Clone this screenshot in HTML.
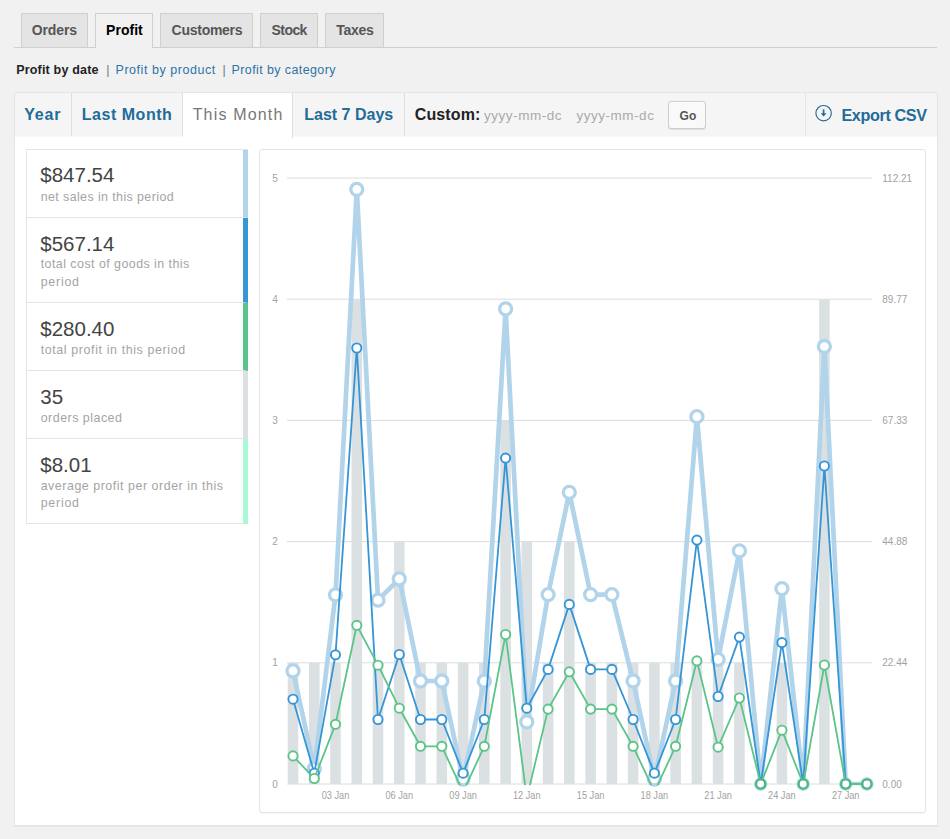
<!DOCTYPE html>
<html><head><meta charset="utf-8"><title>Profit by date</title>
<style>
html,body{margin:0;padding:0;}
body{width:950px;height:839px;background:#f1f1f1;position:relative;overflow:hidden;font-family:"Liberation Sans",sans-serif;}
.t{position:absolute;white-space:nowrap;line-height:1;}
.abs{position:absolute;box-sizing:border-box;}
.tabline{left:14px;top:47px;width:923px;height:1px;background:#cfcfcf;}
.tab{top:13px;height:34px;border:1px solid #cfcfcf;border-bottom:none;background:#e4e4e4;}
.tab.on{background:#f1f1f1;height:35px;}
.postbox{left:14px;top:92px;width:924px;height:734px;background:#fff;border:1px solid #e5e5e5;box-shadow:0 1px 1px rgba(0,0,0,.04);}
.range{left:15px;top:93px;width:922px;height:43px;background:#f5f5f5;border-bottom:1px solid #fafafa;box-sizing:content-box;}
.rt{top:93px;height:43px;border-right:1px solid #dfdfdf;}
.rt.on{background:#fff;height:45px;}
.legend{left:26px;top:149px;width:222px;height:375px;border:1px solid #e5e5e5;border-right:none;background:#fff;}
.lrow{left:27px;width:221px;border-right:5px solid;border-bottom:1px solid #e5e5e5;}
.chartbox{left:259px;top:149px;width:667px;height:664px;border:1px solid #e5e5e5;border-radius:3px;background:#fff;box-shadow:0 1px 1px rgba(0,0,0,.04);}
.plot{position:absolute;left:0;top:0;}
.go{left:668px;top:101px;width:38px;height:28px;border:1px solid #cdcdcd;border-radius:3px;background:#f9f9f9;box-shadow:inset 0 1px 0 #fff,0 1px 0 rgba(0,0,0,.08);}
</style></head><body>
<div class="abs tabline"></div>
<div class="abs tab" style="left:21px;width:67px"></div>
<div class="abs tab on" style="left:95px;width:58px"></div>
<div class="abs tab" style="left:160px;width:93px"></div>
<div class="abs tab" style="left:260px;width:58px"></div>
<div class="abs tab" style="left:325px;width:59px"></div>
<span class="t" style="left:31.8px;top:23.15px;font-size:14px;font-weight:700;color:#555;letter-spacing:-0.144px;">Orders</span>
<span class="t" style="left:106.1px;top:23.15px;font-size:14px;font-weight:700;color:#000;letter-spacing:0.008px;">Profit</span>
<span class="t" style="left:171.6px;top:23.15px;font-size:14px;font-weight:700;color:#555;letter-spacing:-0.268px;">Customers</span>
<span class="t" style="left:271.6px;top:23.15px;font-size:14px;font-weight:700;color:#555;letter-spacing:-0.581px;">Stock</span>
<span class="t" style="left:336.3px;top:23.15px;font-size:14px;font-weight:700;color:#555;letter-spacing:-0.318px;">Taxes</span>
<span class="t" style="left:16.2px;top:63.62px;font-size:12.5px;font-weight:700;color:#222;letter-spacing:0.187px;">Profit by date</span>
<span class="t" style="left:106.3px;top:63.62px;font-size:12.5px;font-weight:400;color:#777;">|</span>
<span class="t" style="left:115.5px;top:63.62px;font-size:12.5px;font-weight:400;color:#2e73a6;letter-spacing:0.549px;">Profit by product</span>
<span class="t" style="left:222.4px;top:63.62px;font-size:12.5px;font-weight:400;color:#777;">|</span>
<span class="t" style="left:231.6px;top:63.62px;font-size:12.5px;font-weight:400;color:#2e73a6;letter-spacing:0.390px;">Profit by category</span>
<div class="abs postbox"></div>
<div class="abs range"></div>
<div class="abs rt" style="left:15px;width:57px"></div>
<div class="abs rt" style="left:72px;width:111px"></div>
<div class="abs rt on" style="left:183px;width:110px"></div>
<div class="abs rt" style="left:293px;width:112px"></div>
<div class="abs rt" style="left:805px;width:1px;border-right:none;background:#e5e5e5"></div>
<span class="t" style="left:24.2px;top:106.96px;font-size:16px;font-weight:700;color:#236b98;letter-spacing:0.862px;">Year</span>
<span class="t" style="left:81.8px;top:106.96px;font-size:16px;font-weight:700;color:#236b98;letter-spacing:0.519px;">Last Month</span>
<span class="t" style="left:192.7px;top:106.96px;font-size:16px;font-weight:400;color:#777;letter-spacing:1.162px;">This Month</span>
<span class="t" style="left:304.3px;top:106.96px;font-size:16px;font-weight:700;color:#236b98;letter-spacing:-0.004px;">Last 7 Days</span>
<span class="t" style="left:414.7px;top:106.96px;font-size:16px;font-weight:700;color:#222;letter-spacing:0.135px;">Custom:</span>
<span class="t" style="left:484px;top:109.07px;font-size:13.5px;font-weight:400;color:#aaa;letter-spacing:0.528px;">yyyy-mm-dc</span>
<span class="t" style="left:576.4px;top:109.07px;font-size:13.5px;font-weight:400;color:#aaa;letter-spacing:0.528px;">yyyy-mm-dc</span>
<div class="abs go"></div>
<span class="t" style="left:679.6px;top:110.04px;font-size:12px;font-weight:700;color:#555;">Go</span>
<svg class="abs" style="left:814px;top:104px" width="19" height="19" viewBox="0 0 19 19"><circle cx="9.6" cy="9.2" r="7.7" fill="none" stroke="#236b98" stroke-width="1.15"/><path d="M9.6 5.4v4.6" fill="none" stroke="#236b98" stroke-width="1.7"/><path d="M6.7 9.2h5.8l-2.9 3.4z" fill="#236b98"/></svg>
<span class="t" style="left:841.4px;top:107.09px;font-size:16.2px;font-weight:700;color:#236b98;letter-spacing:-0.374px;">Export CSV</span>
<div class="abs legend"></div>
<div class="abs lrow" style="top:150px;height:68px;border-right-color:#b1d4ea"></div>
<div class="abs lrow" style="top:218px;height:85px;border-right-color:#3796d4"></div>
<div class="abs lrow" style="top:303px;height:68px;border-right-color:#5cc488"></div>
<div class="abs lrow" style="top:371px;height:68px;border-right-color:#dbe1e3"></div>
<div class="abs lrow" style="top:439px;height:85px;border-right-color:#a8f9d4;border-bottom:none"></div>
<span class="t" style="left:40.3px;top:165.45px;font-size:20.5px;font-weight:400;color:#444;">$847.54</span>
<span class="t" style="left:40.7px;top:190.90px;font-size:12.4px;font-weight:400;color:#a4a4a4;letter-spacing:0.418px;">net sales in this period</span>
<span class="t" style="left:40.3px;top:233.95px;font-size:20.5px;font-weight:400;color:#444;">$567.14</span>
<span class="t" style="left:40.7px;top:258.40px;font-size:12.4px;font-weight:400;color:#a4a4a4;letter-spacing:0.470px;">total cost of goods in this</span>
<span class="t" style="left:40.7px;top:276.00px;font-size:12.4px;font-weight:400;color:#a4a4a4;letter-spacing:0.769px;">period</span>
<span class="t" style="left:40.3px;top:319.25px;font-size:20.5px;font-weight:400;color:#444;">$280.40</span>
<span class="t" style="left:40.7px;top:343.90px;font-size:12.4px;font-weight:400;color:#a4a4a4;letter-spacing:0.627px;">total profit in this period</span>
<span class="t" style="left:40.3px;top:387.15px;font-size:20.5px;font-weight:400;color:#444;">35</span>
<span class="t" style="left:40.7px;top:411.80px;font-size:12.4px;font-weight:400;color:#a4a4a4;letter-spacing:0.510px;">orders placed</span>
<span class="t" style="left:40.3px;top:455.05px;font-size:20.5px;font-weight:400;color:#444;">$8.01</span>
<span class="t" style="left:40.7px;top:479.70px;font-size:12.4px;font-weight:400;color:#a4a4a4;letter-spacing:0.545px;">average profit per order in this</span>
<span class="t" style="left:40.7px;top:497.30px;font-size:12.4px;font-weight:400;color:#a4a4a4;letter-spacing:0.769px;">period</span>
<div class="abs chartbox"></div>
<svg class="plot" width="950" height="839" viewBox="0 0 950 839">
<defs><clipPath id="cp"><rect x="280" y="170" width="600" height="615.2"/></clipPath></defs>
<line x1="287" x2="872" y1="784.0" y2="784.0" stroke="#dcdcdc" stroke-width="1"/>
<line x1="287" x2="872" y1="662.8" y2="662.8" stroke="#dcdcdc" stroke-width="1"/>
<line x1="287" x2="872" y1="541.6" y2="541.6" stroke="#dcdcdc" stroke-width="1"/>
<line x1="287" x2="872" y1="420.4" y2="420.4" stroke="#dcdcdc" stroke-width="1"/>
<line x1="287" x2="872" y1="299.2" y2="299.2" stroke="#dcdcdc" stroke-width="1"/>
<line x1="287" x2="872" y1="178.0" y2="178.0" stroke="#dcdcdc" stroke-width="1"/>
<rect x="287.7" y="662.8" width="10.6" height="121.2" fill="#dbe1e3"/>
<rect x="309.0" y="662.8" width="10.6" height="121.2" fill="#dbe1e3"/>
<rect x="330.2" y="662.8" width="10.6" height="121.2" fill="#dbe1e3"/>
<rect x="351.5" y="299.2" width="10.6" height="484.8" fill="#dbe1e3"/>
<rect x="372.7" y="662.8" width="10.6" height="121.2" fill="#dbe1e3"/>
<rect x="394.0" y="541.6" width="10.6" height="242.4" fill="#dbe1e3"/>
<rect x="415.2" y="662.8" width="10.6" height="121.2" fill="#dbe1e3"/>
<rect x="436.5" y="662.8" width="10.6" height="121.2" fill="#dbe1e3"/>
<rect x="457.8" y="662.8" width="10.6" height="121.2" fill="#dbe1e3"/>
<rect x="479.0" y="662.8" width="10.6" height="121.2" fill="#dbe1e3"/>
<rect x="500.3" y="420.4" width="10.6" height="363.6" fill="#dbe1e3"/>
<rect x="521.5" y="541.6" width="10.6" height="242.4" fill="#dbe1e3"/>
<rect x="542.8" y="662.8" width="10.6" height="121.2" fill="#dbe1e3"/>
<rect x="564.0" y="541.6" width="10.6" height="242.4" fill="#dbe1e3"/>
<rect x="585.3" y="662.8" width="10.6" height="121.2" fill="#dbe1e3"/>
<rect x="606.6" y="662.8" width="10.6" height="121.2" fill="#dbe1e3"/>
<rect x="627.8" y="662.8" width="10.6" height="121.2" fill="#dbe1e3"/>
<rect x="649.1" y="662.8" width="10.6" height="121.2" fill="#dbe1e3"/>
<rect x="670.3" y="662.8" width="10.6" height="121.2" fill="#dbe1e3"/>
<rect x="691.6" y="662.8" width="10.6" height="121.2" fill="#dbe1e3"/>
<rect x="712.8" y="662.8" width="10.6" height="121.2" fill="#dbe1e3"/>
<rect x="734.1" y="662.8" width="10.6" height="121.2" fill="#dbe1e3"/>
<rect x="776.6" y="662.8" width="10.6" height="121.2" fill="#dbe1e3"/>
<rect x="819.1" y="299.2" width="10.6" height="484.8" fill="#dbe1e3"/>
<polyline clip-path="url(#cp)" fill="none" stroke-linejoin="round" points="293.0,670.9 314.3,768.7 335.5,594.9 356.8,189.3 378.0,600.2 399.3,578.8 420.5,681.0 441.8,681.0 463.1,779.0 484.3,681.2 505.6,308.9 526.8,721.9 548.1,594.6 569.3,492.4 590.6,594.6 611.9,594.6 633.1,681.0 654.4,779.0 675.6,681.0 696.9,416.7 718.1,659.3 739.4,550.9 760.7,784.0 781.9,588.6 803.2,784.0 824.4,346.5 845.7,784.0 866.9,784.0" stroke="#b1d4ea" stroke-width="4.7"/>
<circle cx="293.0" cy="670.9" r="6" fill="#fff" stroke="#b1d4ea" stroke-width="3.3"/>
<circle cx="314.3" cy="768.7" r="6" fill="#fff" stroke="#b1d4ea" stroke-width="3.3"/>
<circle cx="335.5" cy="594.9" r="6" fill="#fff" stroke="#b1d4ea" stroke-width="3.3"/>
<circle cx="356.8" cy="189.3" r="6" fill="#fff" stroke="#b1d4ea" stroke-width="3.3"/>
<circle cx="378.0" cy="600.2" r="6" fill="#fff" stroke="#b1d4ea" stroke-width="3.3"/>
<circle cx="399.3" cy="578.8" r="6" fill="#fff" stroke="#b1d4ea" stroke-width="3.3"/>
<circle cx="420.5" cy="681.0" r="6" fill="#fff" stroke="#b1d4ea" stroke-width="3.3"/>
<circle cx="441.8" cy="681.0" r="6" fill="#fff" stroke="#b1d4ea" stroke-width="3.3"/>
<circle cx="463.1" cy="779.0" r="6" fill="#fff" stroke="#b1d4ea" stroke-width="3.3"/>
<circle cx="484.3" cy="681.2" r="6" fill="#fff" stroke="#b1d4ea" stroke-width="3.3"/>
<circle cx="505.6" cy="308.9" r="6" fill="#fff" stroke="#b1d4ea" stroke-width="3.3"/>
<circle cx="526.8" cy="721.9" r="6" fill="#fff" stroke="#b1d4ea" stroke-width="3.3"/>
<circle cx="548.1" cy="594.6" r="6" fill="#fff" stroke="#b1d4ea" stroke-width="3.3"/>
<circle cx="569.3" cy="492.4" r="6" fill="#fff" stroke="#b1d4ea" stroke-width="3.3"/>
<circle cx="590.6" cy="594.6" r="6" fill="#fff" stroke="#b1d4ea" stroke-width="3.3"/>
<circle cx="611.9" cy="594.6" r="6" fill="#fff" stroke="#b1d4ea" stroke-width="3.3"/>
<circle cx="633.1" cy="681.0" r="6" fill="#fff" stroke="#b1d4ea" stroke-width="3.3"/>
<circle cx="654.4" cy="779.0" r="6" fill="#fff" stroke="#b1d4ea" stroke-width="3.3"/>
<circle cx="675.6" cy="681.0" r="6" fill="#fff" stroke="#b1d4ea" stroke-width="3.3"/>
<circle cx="696.9" cy="416.7" r="6" fill="#fff" stroke="#b1d4ea" stroke-width="3.3"/>
<circle cx="718.1" cy="659.3" r="6" fill="#fff" stroke="#b1d4ea" stroke-width="3.3"/>
<circle cx="739.4" cy="550.9" r="6" fill="#fff" stroke="#b1d4ea" stroke-width="3.3"/>
<circle cx="760.7" cy="784.0" r="5.4" fill="#fff" stroke="#a6dccb" stroke-width="2.6"/>
<circle cx="781.9" cy="588.6" r="6" fill="#fff" stroke="#b1d4ea" stroke-width="3.3"/>
<circle cx="803.2" cy="784.0" r="5.4" fill="#fff" stroke="#a6dccb" stroke-width="2.6"/>
<circle cx="824.4" cy="346.5" r="6" fill="#fff" stroke="#b1d4ea" stroke-width="3.3"/>
<circle cx="845.7" cy="784.0" r="5.4" fill="#fff" stroke="#a6dccb" stroke-width="2.6"/>
<circle cx="866.9" cy="784.0" r="5.4" fill="#fff" stroke="#a6dccb" stroke-width="2.6"/>
<polyline clip-path="url(#cp)" fill="none" stroke-linejoin="round" points="293.0,699.2 314.3,773.2 335.5,654.8 356.8,348.0 378.0,719.5 399.3,654.5 420.5,719.5 441.8,719.5 463.1,773.2 484.3,719.5 505.6,458.1 526.8,708.2 548.1,669.4 569.3,604.4 590.6,669.4 611.9,669.4 633.1,719.5 654.4,773.2 675.6,719.5 696.9,540.1 718.1,696.5 739.4,637.1 760.7,784.0 781.9,642.6 803.2,784.0 824.4,466.0 845.7,784.0 866.9,784.0" stroke="#3595d6" stroke-width="1.8"/>
<circle cx="293.0" cy="699.2" r="4.6" fill="#fff" stroke="#3595d6" stroke-width="1.9"/>
<circle cx="314.3" cy="773.2" r="4.6" fill="#fff" stroke="#3595d6" stroke-width="1.9"/>
<circle cx="335.5" cy="654.8" r="4.6" fill="#fff" stroke="#3595d6" stroke-width="1.9"/>
<circle cx="356.8" cy="348.0" r="4.6" fill="#fff" stroke="#3595d6" stroke-width="1.9"/>
<circle cx="378.0" cy="719.5" r="4.6" fill="#fff" stroke="#3595d6" stroke-width="1.9"/>
<circle cx="399.3" cy="654.5" r="4.6" fill="#fff" stroke="#3595d6" stroke-width="1.9"/>
<circle cx="420.5" cy="719.5" r="4.6" fill="#fff" stroke="#3595d6" stroke-width="1.9"/>
<circle cx="441.8" cy="719.5" r="4.6" fill="#fff" stroke="#3595d6" stroke-width="1.9"/>
<circle cx="463.1" cy="773.2" r="4.6" fill="#fff" stroke="#3595d6" stroke-width="1.9"/>
<circle cx="484.3" cy="719.5" r="4.6" fill="#fff" stroke="#3595d6" stroke-width="1.9"/>
<circle cx="505.6" cy="458.1" r="4.6" fill="#fff" stroke="#3595d6" stroke-width="1.9"/>
<circle cx="526.8" cy="708.2" r="4.6" fill="#fff" stroke="#3595d6" stroke-width="1.9"/>
<circle cx="548.1" cy="669.4" r="4.6" fill="#fff" stroke="#3595d6" stroke-width="1.9"/>
<circle cx="569.3" cy="604.4" r="4.6" fill="#fff" stroke="#3595d6" stroke-width="1.9"/>
<circle cx="590.6" cy="669.4" r="4.6" fill="#fff" stroke="#3595d6" stroke-width="1.9"/>
<circle cx="611.9" cy="669.4" r="4.6" fill="#fff" stroke="#3595d6" stroke-width="1.9"/>
<circle cx="633.1" cy="719.5" r="4.6" fill="#fff" stroke="#3595d6" stroke-width="1.9"/>
<circle cx="654.4" cy="773.2" r="4.6" fill="#fff" stroke="#3595d6" stroke-width="1.9"/>
<circle cx="675.6" cy="719.5" r="4.6" fill="#fff" stroke="#3595d6" stroke-width="1.9"/>
<circle cx="696.9" cy="540.1" r="4.6" fill="#fff" stroke="#3595d6" stroke-width="1.9"/>
<circle cx="718.1" cy="696.5" r="4.6" fill="#fff" stroke="#3595d6" stroke-width="1.9"/>
<circle cx="739.4" cy="637.1" r="4.6" fill="#fff" stroke="#3595d6" stroke-width="1.9"/>
<circle cx="781.9" cy="642.6" r="4.6" fill="#fff" stroke="#3595d6" stroke-width="1.9"/>
<circle cx="824.4" cy="466.0" r="4.6" fill="#fff" stroke="#3595d6" stroke-width="1.9"/>
<polyline clip-path="url(#cp)" fill="none" stroke-linejoin="round" points="293.0,755.9 314.3,778.5 335.5,724.3 356.8,625.3 378.0,665.2 399.3,708.2 420.5,746.3 441.8,746.3 463.1,792.0 484.3,746.3 505.6,634.5 526.8,798.0 548.1,709.1 569.3,671.8 590.6,709.1 611.9,709.1 633.1,746.3 654.4,792.0 675.6,746.3 696.9,660.8 718.1,747.2 739.4,698.0 760.7,784.0 781.9,730.2 803.2,784.0 824.4,665.0 845.7,784.0 866.9,784.0" stroke="#5cc488" stroke-width="1.8"/>
<circle cx="293.0" cy="755.9" r="4.6" fill="#fff" stroke="#5cc488" stroke-width="1.9"/>
<circle cx="314.3" cy="778.5" r="4.6" fill="#fff" stroke="#5cc488" stroke-width="1.9"/>
<circle cx="335.5" cy="724.3" r="4.6" fill="#fff" stroke="#5cc488" stroke-width="1.9"/>
<circle cx="356.8" cy="625.3" r="4.6" fill="#fff" stroke="#5cc488" stroke-width="1.9"/>
<circle cx="378.0" cy="665.2" r="4.6" fill="#fff" stroke="#5cc488" stroke-width="1.9"/>
<circle cx="399.3" cy="708.2" r="4.6" fill="#fff" stroke="#5cc488" stroke-width="1.9"/>
<circle cx="420.5" cy="746.3" r="4.6" fill="#fff" stroke="#5cc488" stroke-width="1.9"/>
<circle cx="441.8" cy="746.3" r="4.6" fill="#fff" stroke="#5cc488" stroke-width="1.9"/>
<circle cx="484.3" cy="746.3" r="4.6" fill="#fff" stroke="#5cc488" stroke-width="1.9"/>
<circle cx="505.6" cy="634.5" r="4.6" fill="#fff" stroke="#5cc488" stroke-width="1.9"/>
<circle cx="548.1" cy="709.1" r="4.6" fill="#fff" stroke="#5cc488" stroke-width="1.9"/>
<circle cx="569.3" cy="671.8" r="4.6" fill="#fff" stroke="#5cc488" stroke-width="1.9"/>
<circle cx="590.6" cy="709.1" r="4.6" fill="#fff" stroke="#5cc488" stroke-width="1.9"/>
<circle cx="611.9" cy="709.1" r="4.6" fill="#fff" stroke="#5cc488" stroke-width="1.9"/>
<circle cx="633.1" cy="746.3" r="4.6" fill="#fff" stroke="#5cc488" stroke-width="1.9"/>
<circle cx="675.6" cy="746.3" r="4.6" fill="#fff" stroke="#5cc488" stroke-width="1.9"/>
<circle cx="696.9" cy="660.8" r="4.6" fill="#fff" stroke="#5cc488" stroke-width="1.9"/>
<circle cx="718.1" cy="747.2" r="4.6" fill="#fff" stroke="#5cc488" stroke-width="1.9"/>
<circle cx="739.4" cy="698.0" r="4.6" fill="#fff" stroke="#5cc488" stroke-width="1.9"/>
<circle cx="760.7" cy="784.0" r="4.6" fill="#fff" stroke="#4db48c" stroke-width="2.3"/>
<circle cx="781.9" cy="730.2" r="4.6" fill="#fff" stroke="#5cc488" stroke-width="1.9"/>
<circle cx="803.2" cy="784.0" r="4.6" fill="#fff" stroke="#4db48c" stroke-width="2.3"/>
<circle cx="824.4" cy="665.0" r="4.6" fill="#fff" stroke="#5cc488" stroke-width="1.9"/>
<circle cx="845.7" cy="784.0" r="4.6" fill="#fff" stroke="#4db48c" stroke-width="2.3"/>
<circle cx="866.9" cy="784.0" r="4.6" fill="#fff" stroke="#4db48c" stroke-width="2.3"/>
<text x="275" y="787.5" text-anchor="middle" font-family="Liberation Sans, sans-serif" font-size="10" fill="#a2a2a2">0</text>
<text x="275" y="666.3" text-anchor="middle" font-family="Liberation Sans, sans-serif" font-size="10" fill="#a2a2a2">1</text>
<text x="275" y="545.1" text-anchor="middle" font-family="Liberation Sans, sans-serif" font-size="10" fill="#a2a2a2">2</text>
<text x="275" y="423.9" text-anchor="middle" font-family="Liberation Sans, sans-serif" font-size="10" fill="#a2a2a2">3</text>
<text x="275" y="302.7" text-anchor="middle" font-family="Liberation Sans, sans-serif" font-size="10" fill="#a2a2a2">4</text>
<text x="275" y="181.5" text-anchor="middle" font-family="Liberation Sans, sans-serif" font-size="10" fill="#a2a2a2">5</text>
<text x="882.3" y="787.5" font-family="Liberation Sans, sans-serif" font-size="10" fill="#a2a2a2">0.00</text>
<text x="882.3" y="666.3" font-family="Liberation Sans, sans-serif" font-size="10" fill="#a2a2a2">22.44</text>
<text x="882.3" y="545.1" font-family="Liberation Sans, sans-serif" font-size="10" fill="#a2a2a2">44.88</text>
<text x="882.3" y="423.9" font-family="Liberation Sans, sans-serif" font-size="10" fill="#a2a2a2">67.33</text>
<text x="882.3" y="302.7" font-family="Liberation Sans, sans-serif" font-size="10" fill="#a2a2a2">89.77</text>
<text x="882.3" y="181.5" font-family="Liberation Sans, sans-serif" font-size="10" fill="#a2a2a2">112.21</text>
<text x="335.5" y="799.3" text-anchor="middle" font-family="Liberation Sans, sans-serif" font-size="10" fill="#a2a2a2" textLength="27.6" lengthAdjust="spacingAndGlyphs">03 Jan</text>
<text x="399.3" y="799.3" text-anchor="middle" font-family="Liberation Sans, sans-serif" font-size="10" fill="#a2a2a2" textLength="27.6" lengthAdjust="spacingAndGlyphs">06 Jan</text>
<text x="463.1" y="799.3" text-anchor="middle" font-family="Liberation Sans, sans-serif" font-size="10" fill="#a2a2a2" textLength="27.6" lengthAdjust="spacingAndGlyphs">09 Jan</text>
<text x="526.8" y="799.3" text-anchor="middle" font-family="Liberation Sans, sans-serif" font-size="10" fill="#a2a2a2" textLength="27.6" lengthAdjust="spacingAndGlyphs">12 Jan</text>
<text x="590.6" y="799.3" text-anchor="middle" font-family="Liberation Sans, sans-serif" font-size="10" fill="#a2a2a2" textLength="27.6" lengthAdjust="spacingAndGlyphs">15 Jan</text>
<text x="654.4" y="799.3" text-anchor="middle" font-family="Liberation Sans, sans-serif" font-size="10" fill="#a2a2a2" textLength="27.6" lengthAdjust="spacingAndGlyphs">18 Jan</text>
<text x="718.1" y="799.3" text-anchor="middle" font-family="Liberation Sans, sans-serif" font-size="10" fill="#a2a2a2" textLength="27.6" lengthAdjust="spacingAndGlyphs">21 Jan</text>
<text x="781.9" y="799.3" text-anchor="middle" font-family="Liberation Sans, sans-serif" font-size="10" fill="#a2a2a2" textLength="27.6" lengthAdjust="spacingAndGlyphs">24 Jan</text>
<text x="845.7" y="799.3" text-anchor="middle" font-family="Liberation Sans, sans-serif" font-size="10" fill="#a2a2a2" textLength="27.6" lengthAdjust="spacingAndGlyphs">27 Jan</text>
</svg>
</body></html>
